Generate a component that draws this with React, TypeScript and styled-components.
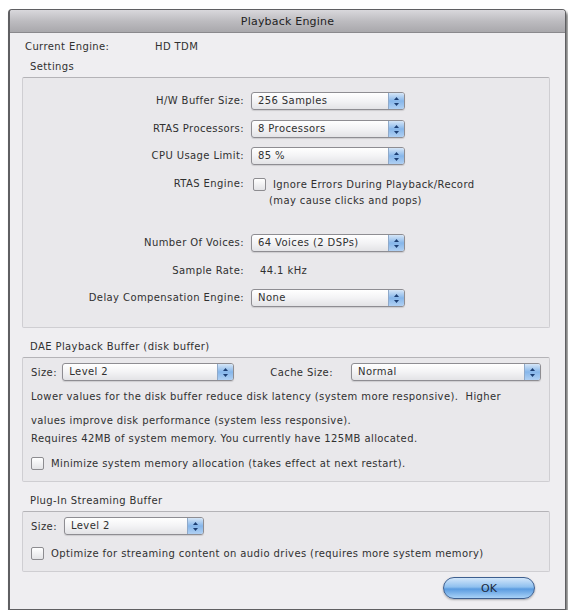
import React from "react";
import styled, { createGlobalStyle } from "styled-components";

const GlobalStyle = createGlobalStyle`
  body {
    margin: 0;
    background: #ffffff;
    font-family: "DejaVu Sans", "Liberation Sans", sans-serif;
    font-size: 10px;
    letter-spacing: 0.4px;
    color: #303030;
  }
`;

const Stepper = () => (
  <svg width="7" height="11" viewBox="0 0 7 11">
    <path d="M3.5 1 L6 4 L1 4 Z" fill="#1d3f74" />
    <path d="M3.5 10 L6 7 L1 7 Z" fill="#1d3f74" />
  </svg>
);

interface PopupProps {
  width: number;
  value: string;
}

const Popup: React.FC<PopupProps> = ({ width, value }) => (
  <PopupBox style={{ width }}>
    <PopupText>{value}</PopupText>
    <PopupArrows>
      <Stepper />
    </PopupArrows>
  </PopupBox>
);

const App: React.FC = () => {
  return (
    <>
      <GlobalStyle />
      <Page>
        <Window>
          <TitleBar>Playback Engine</TitleBar>
          <Body>
            <InfoRow>
              <InfoLabel>Current Engine:</InfoLabel>
              <span>HD TDM</span>
            </InfoRow>

            <GroupTitle>Settings</GroupTitle>
            <SettingsBox>
              <FormRow>
                <FieldLabel>H/W Buffer Size:</FieldLabel>
                <Popup width={152} value="256 Samples" />
              </FormRow>
              <FormRow gap={10}>
                <FieldLabel>RTAS Processors:</FieldLabel>
                <Popup width={152} value="8 Processors" />
              </FormRow>
              <FormRow gap={9}>
                <FieldLabel>CPU Usage Limit:</FieldLabel>
                <Popup width={152} value="85 %" />
              </FormRow>
              <FormRow gap={10} align="start">
                <FieldLabel>RTAS Engine:</FieldLabel>
                <CheckColumn>
                  <CheckLine>
                    <CheckBox />
                    <span>Ignore Errors During Playback/Record</span>
                  </CheckLine>
                  <Note>(may cause clicks and pops)</Note>
                </CheckColumn>
              </FormRow>
              <FormRow gap={26}>
                <FieldLabel>Number Of Voices:</FieldLabel>
                <Popup width={152} value="64 Voices (2 DSPs)" />
              </FormRow>
              <FormRow gap={10}>
                <FieldLabel>Sample Rate:</FieldLabel>
                <ValueText>44.1 kHz</ValueText>
              </FormRow>
              <FormRow gap={9}>
                <FieldLabel>Delay Compensation Engine:</FieldLabel>
                <Popup width={152} value="None" />
              </FormRow>
            </SettingsBox>

            <GroupTitle top={12}>DAE Playback Buffer (disk buffer)</GroupTitle>
            <GroupBox>
              <SizeRow>
                <SmallLabel>Size:</SmallLabel>
                <Popup width={170} value="Level 2" />
                <CacheLabel>Cache Size:</CacheLabel>
                <Popup width={188} value="Normal" />
              </SizeRow>
              <Paragraph top={9}>
                Lower values for the disk buffer reduce disk latency (system more
                responsive).&nbsp; Higher
              </Paragraph>
              <Paragraph top={10}>
                values improve disk performance (system less responsive).
              </Paragraph>
              <Paragraph top={4}>
                Requires 42MB of system memory. You currently have 125MB allocated.
              </Paragraph>
              <CheckLine top={8}>
                <CheckBox />
                <span>Minimize system memory allocation (takes effect at next restart).</span>
              </CheckLine>
            </GroupBox>

            <GroupTitle top={12}>Plug-In Streaming Buffer</GroupTitle>
            <GroupBox>
              <SizeRow>
                <SmallLabel>Size:</SmallLabel>
                <Popup width={138} value="Level 2" />
              </SizeRow>
              <CheckLine top={9}>
                <CheckBox />
                <span>
                  Optimize for streaming content on audio drives (requires more
                  system memory)
                </span>
              </CheckLine>
            </GroupBox>

            <ButtonRow>
              <OkButton>OK</OkButton>
            </ButtonRow>
          </Body>
        </Window>
      </Page>
    </>
  );
};
export default App;

const Page = styled.div`
  padding: 9px 0 0 8px;
`;

const Window = styled.div`
  width: 555px;
  height: 599px;
  display: flex;
  flex-direction: column;
  background: #efeef1;
  border: 1px solid #5f5f62;
  border-left-width: 2px;
  border-radius: 4px 4px 0 0;
  box-shadow: 2px 3px 3px rgba(0, 0, 0, 0.55);
  overflow: hidden;
`;

const TitleBar = styled.div`
  height: 22px;
  flex: none;
  display: flex;
  align-items: center;
  justify-content: center;
  background: linear-gradient(#d9d8dc, #bdbcc0 50%, #a9a8ac);
  border-bottom: 1px solid #8a898d;
  font-size: 11px;
  letter-spacing: 0.2px;
  color: #222;
`;

const Body = styled.div`
  flex: 1;
  display: flex;
  flex-direction: column;
  padding: 0 8px 0 12px;
`;

const InfoRow = styled.div`
  display: flex;
  margin-top: 6px;
  height: 14px;
  align-items: center;
  padding-left: 3px;
`;

const InfoLabel = styled.span`
  width: 130px;
`;

const GroupTitle = styled.div<{ top?: number }>`
  margin-top: ${(p) => p.top ?? 7}px;
  padding-left: 8px;
  height: 14px;
  line-height: 14px;
`;

const GroupBox = styled.div`
  margin-top: 3px;
  margin-right: 7px;
  padding: 5px 8px 9px 8px;
  background: #e9e8eb;
  border: 1px solid #cfced2;
  border-top-color: #b4b3b7;
  border-radius: 2px;
`;

const SettingsBox = styled(GroupBox)`
  padding: 14px 8px 20px 0;
`;

const FormRow = styled.div<{ gap?: number; align?: string }>`
  display: grid;
  grid-template-columns: 221px auto;
  column-gap: 7px;
  align-items: ${(p) => p.align ?? "center"};
  justify-content: start;
  margin-top: ${(p) => p.gap ?? 0}px;
  min-height: 18px;
`;

const FieldLabel = styled.span`
  text-align: right;
  line-height: 18px;
  white-space: nowrap;
`;

const ValueText = styled.span`
  padding-left: 9px;
  line-height: 18px;
`;

const CheckColumn = styled.div`
  display: flex;
  flex-direction: column;
  padding-left: 2px;
`;

const CheckLine = styled.div<{ top?: number }>`
  display: flex;
  align-items: center;
  gap: 7px;
  margin-top: ${(p) => p.top ?? 0}px;
  height: 18px;
  white-space: nowrap;
`;

const Note = styled.div`
  padding-left: 16px;
  line-height: 15px;
`;

const CheckBox = styled.span`
  width: 11px;
  height: 11px;
  flex: none;
  border: 1px solid #8d8c90;
  border-radius: 2px;
  background: linear-gradient(#ffffff, #e3e3e6);
`;

const PopupBox = styled.div`
  height: 16px;
  flex: none;
  display: flex;
  align-items: stretch;
  border: 1px solid #8e8d92;
  border-radius: 3px;
  background: linear-gradient(#ffffff, #f3f3f5 50%, #e3e3e6);
  box-shadow: 0 1px 1px rgba(0, 0, 0, 0.12);
  overflow: hidden;
`;

const PopupText = styled.span`
  flex: 1;
  padding-left: 6px;
  line-height: 16px;
  white-space: nowrap;
`;

const PopupArrows = styled.span`
  width: 15px;
  display: flex;
  align-items: center;
  justify-content: center;
  border-left: 1px solid #8fa9c9;
  background: linear-gradient(#d6e6f7, #86b6ea 50%, #b0d0f3);
`;

const SizeRow = styled.div`
  display: flex;
  align-items: center;
  height: 18px;
`;

const SmallLabel = styled.span`
  width: 33px;
`;

const CacheLabel = styled.span`
  width: 85px;
  margin-left: 36px;
`;

const Paragraph = styled.div<{ top?: number }>`
  margin-top: ${(p) => p.top ?? 0}px;
  line-height: 14px;
  white-space: nowrap;
`;

const ButtonRow = styled.div`
  display: flex;
  justify-content: flex-end;
  margin-top: 5px;
  padding-right: 22px;
`;

const OkButton = styled.button`
  width: 92px;
  height: 22px;
  border: 1px solid #3e5f8f;
  border-radius: 11px;
  background: linear-gradient(#d2e6fa, #8fc0ef 45%, #5a9be0 55%, #a9d2f7);
  font-family: "DejaVu Sans", "Liberation Sans", sans-serif;
  font-size: 11px;
  color: #1c2a3d;
  box-shadow: 0 1px 2px rgba(0, 0, 0, 0.3);
`;
